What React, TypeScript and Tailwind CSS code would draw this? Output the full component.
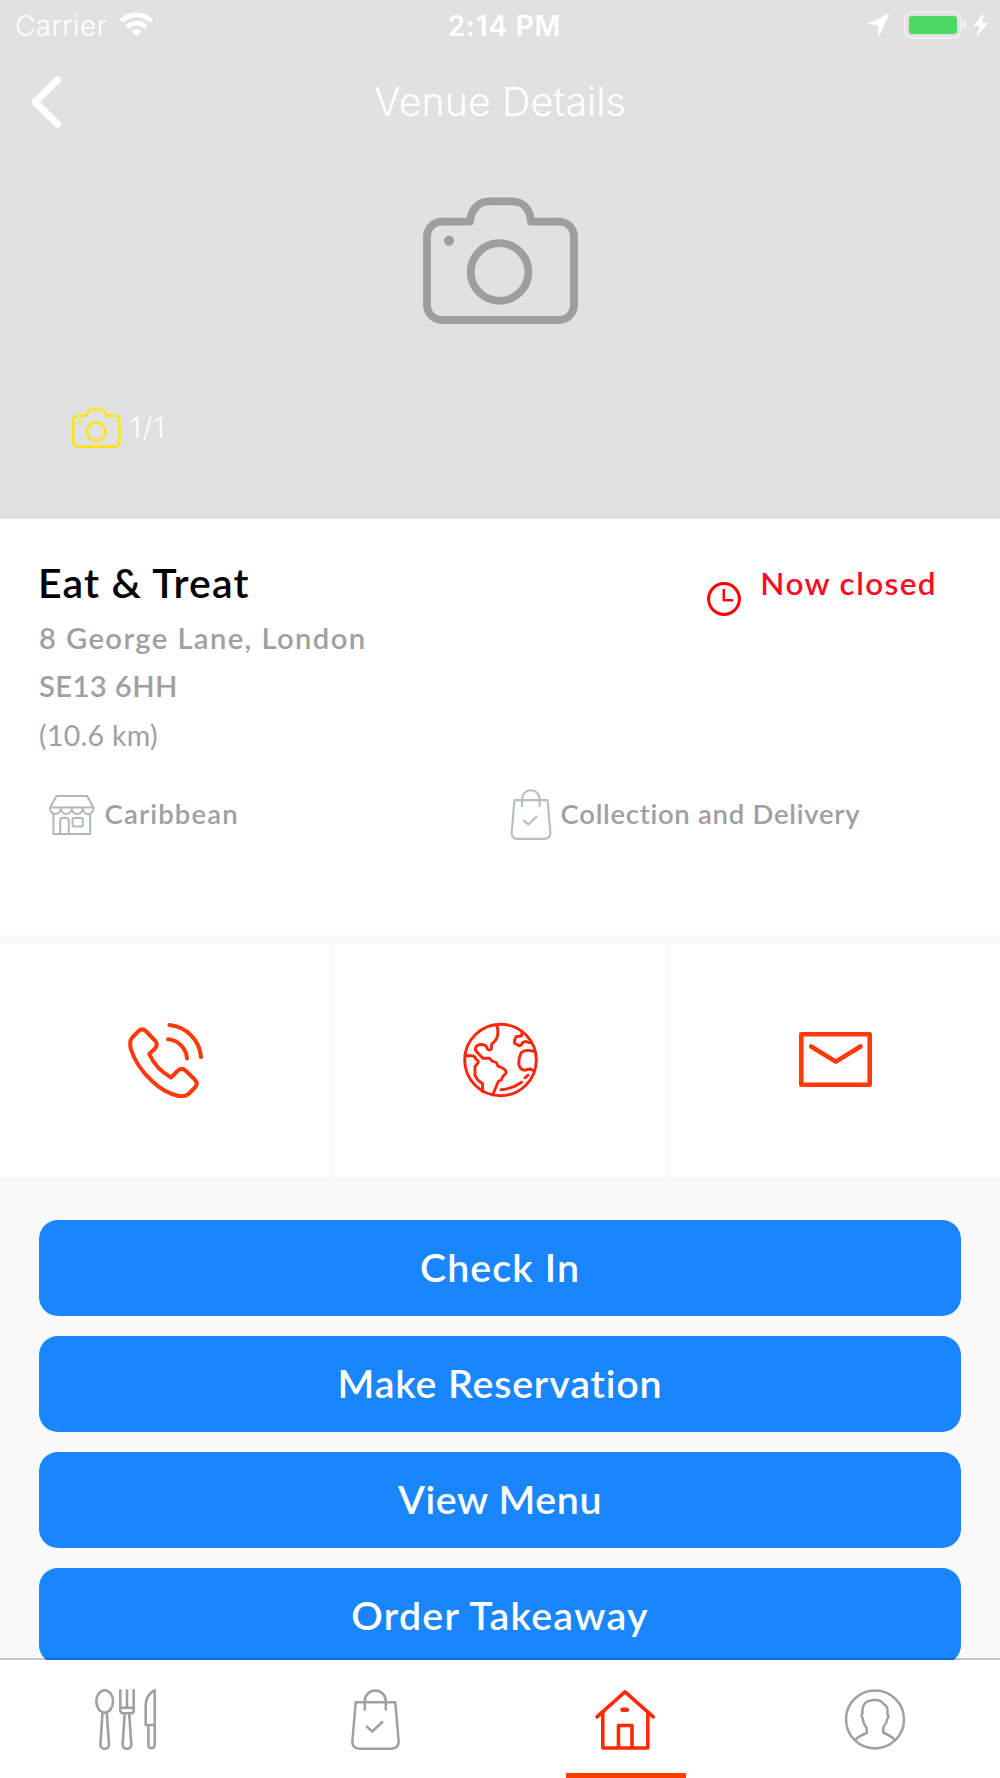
import React from "react";

type IconProps = { className?: string };

const INTER = "font-['Inter','Liberation_Sans',sans-serif]";
const LATO = "font-['Lato','Liberation_Sans',sans-serif]";

const actions = [
  { label: "Check In", tracking: "tracking-[1.1px]" },
  { label: "Make Reservation", tracking: "tracking-[0.85px]" },
  { label: "View Menu", tracking: "tracking-[0.6px]" },
  { label: "Order Takeaway", tracking: "tracking-[1.25px]" },
];

export default function App() {
  return (
    <div className={`flex h-[1778px] w-[1000px] flex-col overflow-hidden bg-[#f9f9f9] ${LATO}`}>
      <main className="h-[1660px] shrink-0 overflow-hidden">
        <Hero />
        <VenueInfo />
        <Contacts />

        {/* Actions */}
        <div className="flex flex-col gap-[20px] px-[39.3px] pt-[43.5px]">
          {actions.map(({ label, tracking }) => (
            <button
              key={label}
              className={`flex h-[96px] shrink-0 items-center justify-center rounded-[19px] bg-[#1985ff] pb-[2px] text-[39.3px] font-semibold text-white ${tracking}`}
            >
              {label}
            </button>
          ))}
        </div>
      </main>

      <TabBar />
    </div>
  );
}

/* Header */

const StatusBar = () => (
  <div className="flex h-[50px] items-center pt-[1px]">
    <div className="flex flex-1 items-center gap-[12px] pl-[15px]">
      <span className="text-[28px] font-[350] tracking-[0.4px]">Carrier</span>
      <WifiIcon className="-mt-[2px] h-[25px] w-[35px]" />
    </div>
    <span className="pl-[6px] text-[28px] font-semibold tracking-[0.8px]">2:14 PM</span>
    <div className="flex flex-1 items-center justify-end pr-[12px] pb-[2px]">
      <svg viewBox="0 0 24 24" className="mr-[14px] h-[24px] w-[24px]" fill="currentColor">
        <path d="M.7 11 23.7.3 13 23.5 12 12.3Z" />
      </svg>
      <div className="flex h-[28px] w-[58px] items-center justify-center rounded-[8px] border-2 border-[#efefef]">
        <div className="h-[18px] w-[48px] rounded-[3px] bg-[#4cd964]" />
      </div>
      <div className="ml-[1.5px] h-[10px] w-[3.5px] rounded-r-full bg-[#efefef]" />
      <svg viewBox="0 0 15 24" className="ml-[6.5px] h-[24px] w-[15px]" fill="currentColor">
        <path d="M11 0 .3 13H6.8L3.4 24 15 10H9.2Z" />
      </svg>
    </div>
  </div>
);

const Hero = () => (
  <header className={`h-[519px] bg-[#e1e1e1] text-white ${INTER}`}>
    <StatusBar />
    <nav className="grid h-[104px] grid-cols-[100px_1fr_100px] items-center">
      <svg viewBox="0 0 31 52" className="ml-[31px] h-[52px] w-[31px]" fill="none" stroke="currentColor" strokeWidth="7" strokeLinecap="round" strokeLinejoin="round">
        <path d="M26.5 4 4 26 26.5 48" />
      </svg>
      <h1 className="pt-[2px] text-center text-[39.5px] font-[330]">Venue Details</h1>
    </nav>
    <div className="flex justify-center pt-[43px]">
      <CameraIcon className="h-[127px] w-[155px] text-[#9e9e9e]" />
    </div>
    <div className="mt-[82px] flex h-[42px] items-center gap-[9px] pl-[72px]">
      <CameraIcon className="mt-[1px] h-[40px] w-[49px] text-[#ffe600]" />
      <span className="pt-[2px] text-[28px] font-light tracking-[1.4px]">1/1</span>
    </div>
  </header>
);

/* Venue */

const VenueInfo = () => (
  <section className="flex h-[416px] flex-col bg-white pt-[39px] text-[#a0a0a0]">
    <div className="flex justify-between pr-[63px] pl-[38px]">
      <div>
        <h2 className="text-[41px] leading-[50px] font-semibold tracking-[1.15px] text-black">Eat &amp; Treat</h2>
        <address className="mt-[6px] pl-[1px] text-[29.2px] leading-[48.3px] font-semibold not-italic">
          <p className="tracking-[1.4px]">8 George Lane, London</p>
          <p className="tracking-[0.4px]">SE13 6HH</p>
          <p className="text-[28.5px] font-normal tracking-[0.3px]">(10.6 km)</p>
        </address>
      </div>
      <div className="flex items-start gap-[19.5px]">
        <ClockIcon className="mt-[24px] h-[34px] w-[34px] text-[#ff0000]" />
        <span className="text-[31.5px] leading-[50px] font-semibold tracking-[1.4px] text-[#ff0b24]">Now closed</span>
      </div>
    </div>
    <div className="mt-[28px] flex h-[56px] items-center pl-[48.5px] text-[27.5px] font-semibold">
      <div className="flex w-[461px] items-center gap-[10px]">
        <StoreIcon className="h-[40px] w-[46px] text-[#b0b9be]" />
        <span className="-mt-[2px] tracking-[1.15px]">Caribbean</span>
      </div>
      <div className="flex items-center gap-[9px]">
        <BagIcon className="h-[51px] w-[42px] text-[#b5bec3]" />
        <span className="-mt-[2px] tracking-[0.72px]">Collection and Delivery</span>
      </div>
    </div>
  </section>
);

const Contacts = () => (
  <section className="mt-[9px] grid h-[232.5px] grid-cols-3 gap-[4px]">
    <ContactCell>
      <PhoneIcon className="h-[75px] w-[75px] text-[#ff3908]" />
    </ContactCell>
    <ContactCell>
      <GlobeIcon className="ml-[1px] h-[76px] w-[75px] text-[#ff2610]" />
    </ContactCell>
    <ContactCell>
      <MailIcon className="mb-[2px] ml-[1px] h-[55px] w-[73px] text-[#ff3908]" />
    </ContactCell>
  </section>
);

const ContactCell = ({ children }: { children: React.ReactNode }) => (
  <div className="flex items-center justify-center bg-white">{children}</div>
);

/* Tab bar */

const TabBar = () => (
  <footer className="relative -mt-[2px] grid h-[120px] shrink-0 grid-cols-4 border-t-2 border-black/20 bg-white bg-clip-padding text-[#a0a0a0]">
    <Tab>
      <CutleryIcon className="h-[61px] w-[61px]" />
    </Tab>
    <Tab>
      <BagIcon className="h-[61px] w-[49px]" />
    </Tab>
    <Tab active>
      <HomeIcon className="h-[61px] w-[61px] text-[#ff2a08]" />
    </Tab>
    <Tab>
      <ProfileIcon className="h-[61px] w-[61px]" />
    </Tab>
  </footer>
);

const Tab = ({ active = false, children }: { active?: boolean; children: React.ReactNode }) => (
  <div className="flex flex-col items-center">
    <div className="flex h-[113px] items-center pt-[6px]">{children}</div>
    {active && <div className="ml-[1px] h-[5px] w-[120px] bg-[#ff3d00]" />}
  </div>
);

/* Icons */

const WifiIcon = ({ className }: IconProps) => (
  <svg viewBox="0 0 35 25" className={className} fill="none" stroke="currentColor" strokeWidth="4.6">
    <path d="M2.2 9.2A21.7 21.7 0 0 1 32.8 9.2" />
    <path d="M8 15A13.5 13.5 0 0 1 27 15" />
    <path d="M17.5 24.5 12.3 19.3A7.4 7.4 0 0 1 22.7 19.3Z" fill="currentColor" stroke="none" />
  </svg>
);

const CameraIcon = ({ className }: IconProps) => (
  <svg viewBox="0 0 155 127" className={className} fill="none" stroke="currentColor" strokeWidth="7.8" strokeLinejoin="round">
    <path d="M47 24.7H19A15 15 0 0 0 4 39.7V108A15 15 0 0 0 19 123H136A15 15 0 0 0 151 108V39.7A15 15 0 0 0 136 24.7H108C107 12 100 4.3 89 4.3H66C56 4.3 48 12 47 24.7Z" />
    <circle cx="76.5" cy="75" r="28.8" />
    <circle cx="26" cy="43.7" r="5" fill="currentColor" stroke="none" />
  </svg>
);

const ClockIcon = ({ className }: IconProps) => (
  <svg viewBox="0 0 34 34" className={className} fill="none" stroke="currentColor" strokeWidth="3" strokeLinecap="round" strokeLinejoin="round">
    <circle cx="17" cy="17" r="15.4" />
    <path d="M16.8 8V18.3H25.2" strokeWidth="2.5" />
  </svg>
);

const StoreIcon = ({ className }: IconProps) => (
  <svg viewBox="0 0 46 40" className={className} fill="none" stroke="currentColor" strokeWidth="2" strokeLinejoin="round">
    <path d="M7.5 1H38.2L44.5 12.5H1Z" />
    <path d="M1 12.5V13.5A5.4 5.4 0 0 0 11.8 13.5A5.4 5.4 0 0 0 22.7 13.5A5.4 5.4 0 0 0 33.6 13.5A5.4 5.4 0 0 0 44.5 13.5V12.5" />
    <path d="M4.5 18.5V39H41.2V18.5" />
    <path d="M11.2 39V25.5Q11.2 22.7 14 22.7H17Q19.8 22.7 19.8 25.5V39" />
    <rect x="23.5" y="23" width="10.3" height="8.4" rx="1.5" />
  </svg>
);

const BagIcon = ({ className }: IconProps) => (
  <svg viewBox="0 0 49 61" className={className} fill="none" stroke="currentColor" strokeWidth="2.5" strokeLinecap="round" strokeLinejoin="round">
    <path d="M4.7 13.3H44.3L47.7 53Q47.5 59.5 40 59.7H8.5Q1.5 59.5 1.3 53Z" />
    <path d="M13.8 21.5V12A10.5 10.5 0 0 1 34.8 12V21.5" strokeLinecap="butt" />
    <path d="M16 37.7 21.3 42.5 31.3 33" />
  </svg>
);

const PhoneIcon = ({ className }: IconProps) => (
  <svg viewBox="0 0 75 75" className={className} fill="none" stroke="currentColor" strokeWidth="4" strokeLinecap="round" strokeLinejoin="round">
    <path d="M10.5 8.2Q14 4.7 17.8 8L27 17.5Q30.5 21.5 27 25.5L21.2 31Q28 46 43 54.5L49.5 48Q53.5 44 57.5 47.5L67 56.8Q70.5 60.5 67 64.5L60.5 71Q57 74 50 72.8Q36 69.5 24 58Q8 43 2.8 26Q1 18 4.2 14.5Z" />
    <path d="M41.5 2A35 35 0 0 1 73 34" />
    <path d="M40 16.3A20.5 20.5 0 0 1 59 35.5" />
  </svg>
);

const GlobeIcon = ({ className }: IconProps) => (
  <svg viewBox="0 0 75 76" className={className} fill="none" stroke="currentColor" strokeWidth="2.9" strokeLinecap="round" strokeLinejoin="round">
    <circle cx="37.5" cy="38" r="35.8" />
    {/* Americas */}
    <path d="M33.5 3Q35.5 7 34.7 13Q34 18 28.8 22L28.3 27Q26.5 29 24.5 27L22.8 23.6Q16 21 12.8 25Q11.5 28 13.5 29.5L19.7 36.3H26.5L29 39L33.3 40.5L35 44.2L39.5 46Q44 49 43 51.2L39.8 54.5L38.5 57.8L35.3 59.5L29.7 73" />
    <path d="M2 33.7H8.5Q12.5 34 12.7 37Q16 38.5 15 41L12 44.5V53.5L15.2 58.5L19.5 61.5L19.7 69.8" />
    {/* Europe and Africa */}
    <path d="M59 10.5 58.5 14 53 14.8Q51.2 18 51.5 21L55.8 23.8Q58.8 24 59.5 20.5L62.5 19.3 67 20.8" />
    <path d="M72 29.8Q62 26.5 58 31Q55.5 36 55.8 42Q56.5 47 61 48.2L67.5 47 71 49" />
    <path d="M38 67.7Q49 67 58.7 60.3M62 55.8 65 53.2" />
  </svg>
);

const MailIcon = ({ className }: IconProps) => (
  <svg viewBox="0 0 73 55" className={className} fill="none" stroke="currentColor" strokeWidth="4.6" strokeLinecap="round" strokeLinejoin="round">
    <rect x="2.3" y="2.3" width="68.4" height="50.4" />
    <path d="M12.2 14.5 36.8 29.6 61.5 14.5" />
  </svg>
);

const CutleryIcon = ({ className }: IconProps) => (
  <svg viewBox="0 0 61 61" className={className} fill="none" stroke="currentColor" strokeWidth="2.6" strokeLinejoin="round">
    <ellipse cx="9.7" cy="12.4" rx="8.4" ry="11.2" />
    <path d="M7.5 23.8 5.4 55.5A4.2 4.2 0 0 0 14 55.5L11.8 23.8" />
    <path d="M25.3.3V21.5Q25.3 24.3 28.2 24.3H35.8Q38.7 24.3 38.7 21.5V.3M32 .3V18.7M25.3 18.7H38.7" />
    <path d="M29.7 24.3 27.6 55.5A4.2 4.2 0 0 0 36.3 55.5L34.2 24.3" />
    <path d="M59.7 1V36H50.7V16Q51 6 59.7 1ZM53.4 36V56.5A3.2 3.2 0 0 0 59.7 56.5V36" />
  </svg>
);

const HomeIcon = ({ className }: IconProps) => (
  <svg viewBox="0 0 61 61" className={className} fill="none" stroke="currentColor" strokeWidth="3.6" strokeLinecap="round" strokeLinejoin="round">
    <path d="M2 27.8 30 2.8 58.3 27.8" />
    <path d="M7.8 24V59H52.8V24" />
    <path d="M23.5 58.5V36.5H37V58.5" />
    <path d="M27.5 20.7H31.8" strokeWidth="4.6" />
  </svg>
);

const ProfileIcon = ({ className }: IconProps) => (
  <svg viewBox="0 0 61 61" className={className} fill="none" stroke="currentColor" strokeWidth="2.5" strokeLinejoin="round">
    <circle cx="30" cy="30.4" r="29" />
    <path d="M10.2 51Q13 47.5 21.7 44V39Q17.8 34 17.6 28.8Q15.8 27.5 17.5 24Q16.5 11 30 11Q36 11 38.5 14.8Q43.5 17 42.5 25.5Q44.5 28 42.3 29.5Q42 34 38.3 38.5V43.5Q47 47.5 49.8 51" />
  </svg>
);
